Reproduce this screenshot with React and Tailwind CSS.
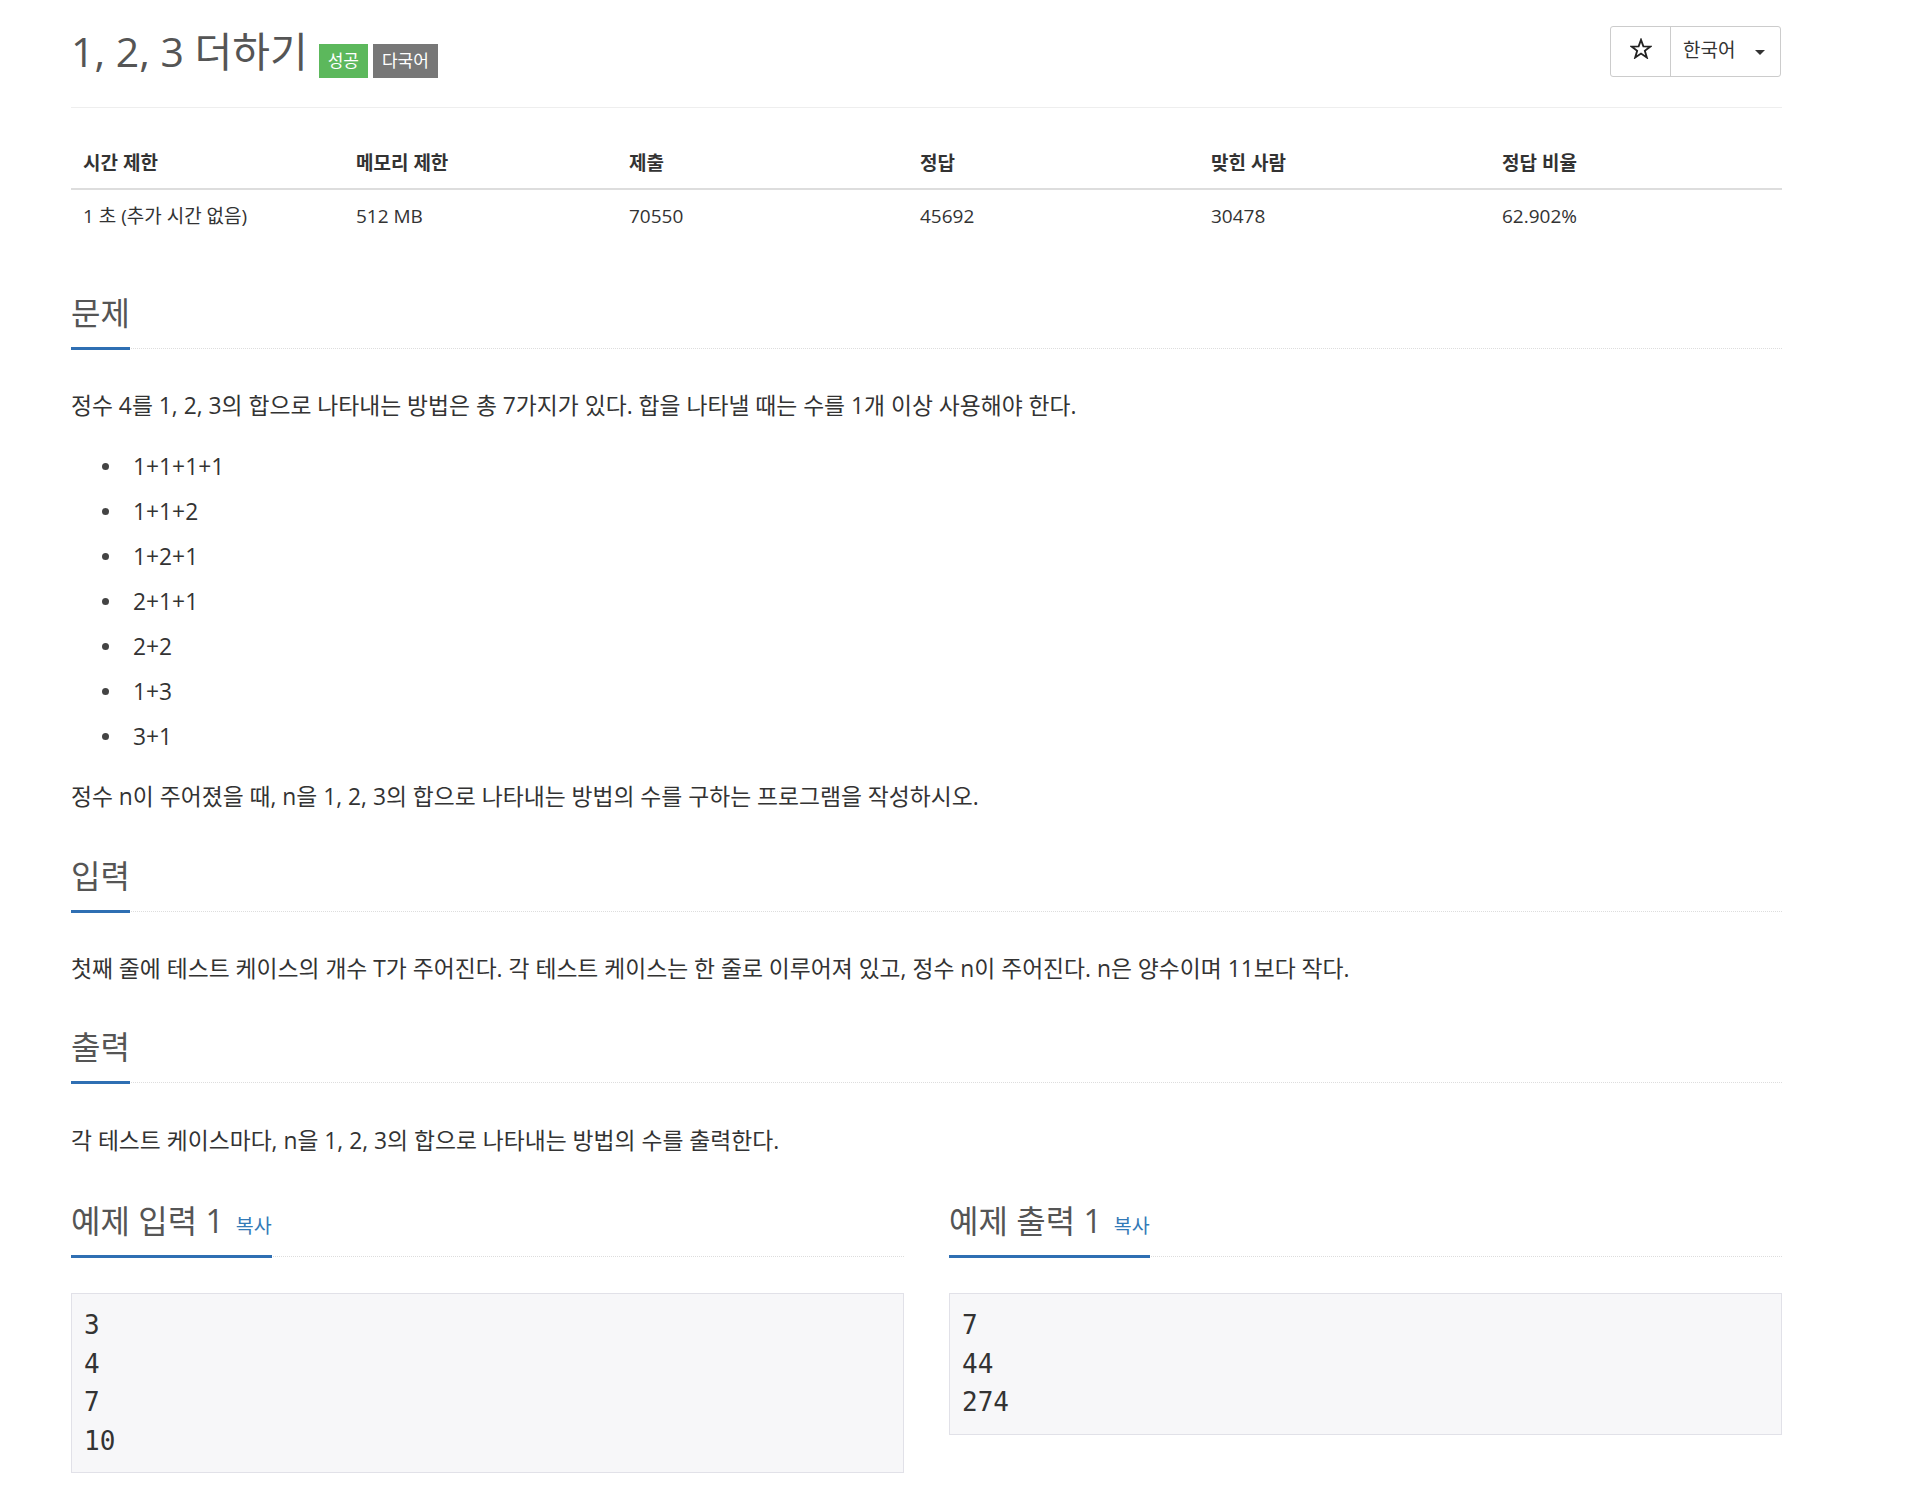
export default function App() {
  const items = ["1+1+1+1", "1+1+2", "1+2+1", "2+1+1", "2+2", "1+3", "3+1"];
  const Heading = ({ children, extra }) => (
    <div className="flex border-b border-dotted border-[#ddd]">
      <h2 className="text-[32px] leading-[32px] pb-[18px] -mb-[2px] border-b-[3px] border-[#2f6fb3] text-[#555] font-normal whitespace-nowrap">
        {children}
        {extra}
      </h2>
    </div>
  );
  const Copy = () => (
    <a className="ml-[12px] text-[19.5px] leading-none text-[#337ab7] align-baseline">복사</a>
  );
  const headers = ["시간 제한", "메모리 제한", "제출", "정답", "맞힌 사람", "정답 비율"];
  const data = ["1 초 (추가 시간 없음)", "512 MB", "70550", "45692", "30478", "62.902%"];
  return (
    <div className="min-h-screen bg-white font-['Open_Sans','Noto_Sans_CJK_KR',sans-serif] text-[#333]">
      <div className="ml-[71px] w-[1711px] pb-[30px]">
        {/* Header */}
        <div className="h-[108px] pt-[26px] border-b border-[#eee] flex justify-between">
          <div className="flex items-start h-[51px]">
            <h1 className="text-[41px] leading-[51px] text-[#555] font-normal whitespace-nowrap">1, 2, 3 더하기</h1>
            <div className="flex gap-[5px] ml-[11px] mt-[18px]">
              <span className="h-[34px] leading-[34px] px-[9px] bg-[#5cb85c] text-white text-[17px]">성공</span>
              <span className="h-[34px] leading-[34px] px-[9px] bg-[#777] text-white text-[17px]">다국어</span>
            </div>
          </div>
          <div className="flex h-[51px] border border-[#ccc] rounded-[3px] mr-[1px]">
            <div className="w-[60px] flex items-center justify-center border-r border-[#ccc] pb-[6px]">
              <svg width="22" height="21" viewBox="0 0 24 23" fill="none" stroke="#222" strokeWidth="2" strokeLinejoin="miter">
                <polygon points="12,2 14.6,9.2 22.3,9.4 16.2,14.1 18.4,21.4 12,17.1 5.6,21.4 7.8,14.1 1.7,9.4 9.4,9.2" />
              </svg>
            </div>
            <div className="w-[109px] flex items-center pl-[12px] text-[19px] text-[#333]">
              <span className="-mt-[3px]">한국어</span>
              <span className="ml-[20px] mt-[2px] w-0 h-0 border-l-[5px] border-r-[5px] border-t-[5px] border-l-transparent border-r-transparent border-t-[#333]"></span>
            </div>
          </div>
        </div>

        {/* Table */}
        <div className="mt-[30px] text-[19px]">
          <div className="grid grid-cols-[273px_273px_291px_291px_291px_292px] border-b-2 border-[#ddd]">
            {headers.map((h) => (
              <div key={h} className="px-[12px] pt-[13px] pb-[12px] leading-[25px] font-bold">{h}</div>
            ))}
          </div>
          <div className="grid grid-cols-[273px_273px_291px_291px_291px_292px]">
            {data.map((d) => (
              <div key={d} className="px-[12px] pt-[14px] pb-[12px] leading-[25px]">{d}</div>
            ))}
          </div>
        </div>

        {/* 문제 */}
        <div className="mt-[56px]">
          <Heading>문제</Heading>
        </div>
        <div className="text-[22.8px] leading-[36px]">
          <p className="mt-[39px]">정수 4를 1, 2, 3의 합으로 나타내는 방법은 총 7가지가 있다. 합을 나타낼 때는 수를 1개 이상 사용해야 한다.</p>
          <ul className="mt-[20px] pl-[31px]">
            {items.map((it) => (
              <li key={it} className="leading-[45px] flex items-center">
                <span className="w-[7px] h-[7px] rounded-full bg-[#444] mr-[24px]"></span>
                <span>{it}</span>
              </li>
            ))}
          </ul>
          <p className="mt-[20px]">정수 n이 주어졌을 때, n을 1, 2, 3의 합으로 나타내는 방법의 수를 구하는 프로그램을 작성하시오.</p>
        </div>

        {/* 입력 */}
        <div className="mt-[45px]">
          <Heading>입력</Heading>
        </div>
        <p className="mt-[39px] text-[22.8px] leading-[36px]">첫째 줄에 테스트 케이스의 개수 T가 주어진다. 각 테스트 케이스는 한 줄로 이루어져 있고, 정수 n이 주어진다. n은 양수이며 11보다 작다.</p>

        {/* 출력 */}
        <div className="mt-[44px]">
          <Heading>출력</Heading>
        </div>
        <p className="mt-[40px] text-[22.8px] leading-[36px]">각 테스트 케이스마다, n을 1, 2, 3의 합으로 나타내는 방법의 수를 출력한다.</p>

        {/* 예제 */}
        <div className="mt-[46px] grid grid-cols-2 gap-x-[45px] items-start">
          <div>
            <Heading extra={<Copy />}>예제 입력 1</Heading>
            <pre className="mt-[36px] border border-[#e1e1e8] bg-[#f7f7f9] px-[12px] py-[12px] text-[26px] leading-[38.5px] font-['DejaVu_Sans_Mono',monospace] text-[#333]">{"3\n4\n7\n10"}</pre>
          </div>
          <div>
            <Heading extra={<Copy />}>예제 출력 1</Heading>
            <pre className="mt-[36px] border border-[#e1e1e8] bg-[#f7f7f9] px-[12px] py-[12px] text-[26px] leading-[38.5px] font-['DejaVu_Sans_Mono',monospace] text-[#333]">{"7\n44\n274"}</pre>
          </div>
        </div>
      </div>
    </div>
  );
}
